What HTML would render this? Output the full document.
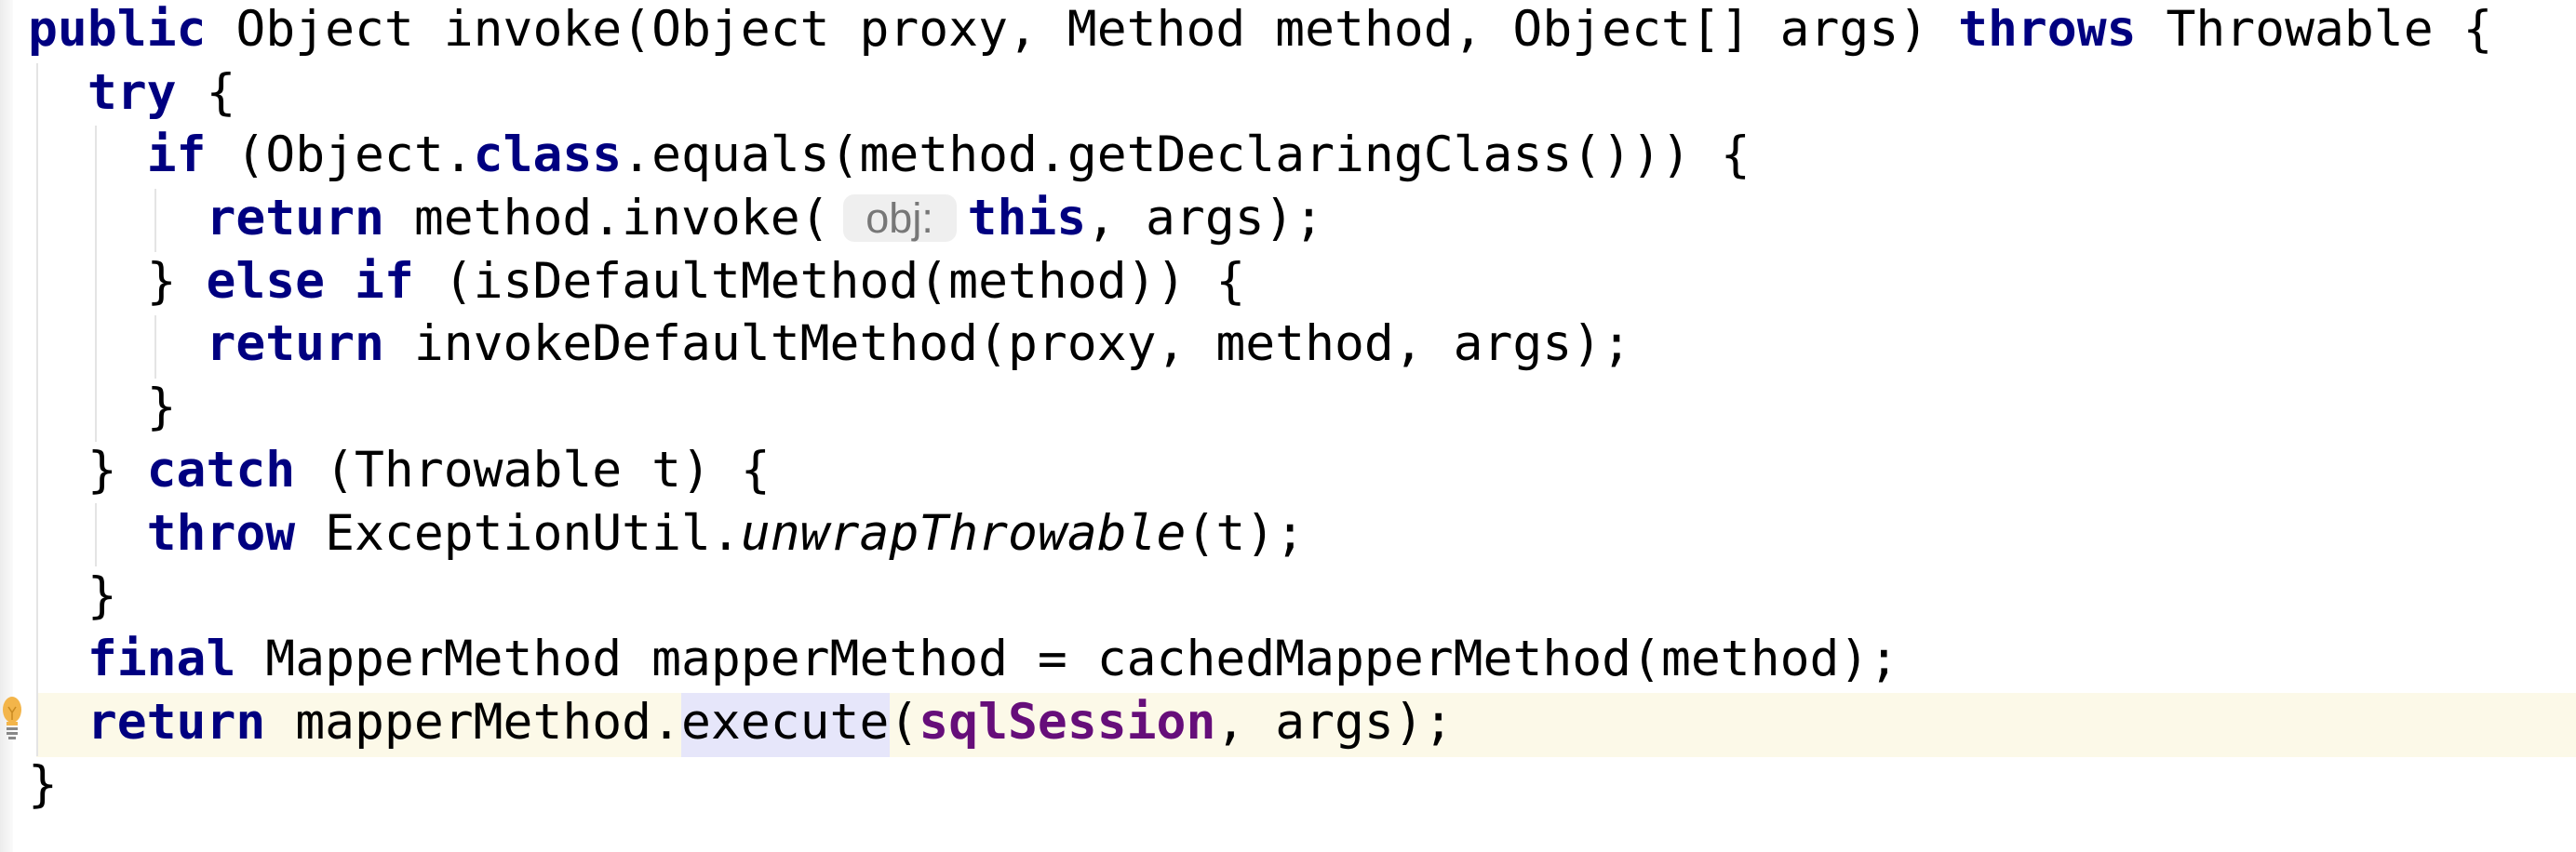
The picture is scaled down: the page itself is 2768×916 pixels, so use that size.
<!DOCTYPE html>
<html><head><meta charset="utf-8"><style>
html,body{margin:0;padding:0;background:#fff;}
body{width:2768px;height:916px;position:relative;overflow:hidden;}
.gut{position:absolute;left:0;top:0;width:14px;height:916px;background:linear-gradient(to right,#ececec,#fafafa);}
.hl{position:absolute;left:39px;right:0;top:745px;height:69px;background:#fcf9e8;}
.ex{position:absolute;left:732px;width:224px;top:745px;height:69px;background:#e6e6fa;}
.guide{position:absolute;width:2px;background:#e4e4e4;}
.l{position:absolute;left:30px;height:68px;line-height:68px;font-family:"DejaVu Sans Mono","Liberation Mono",monospace;font-size:53px;color:#000;white-space:pre;}
.k{color:#000080;font-weight:bold;}
.p{color:#660e7a;font-weight:bold;}
.i{font-style:italic;}
.hint{display:inline-block;width:122px;height:51px;line-height:51px;margin:0 12px 0 14px;background:#efefef;border-radius:12px;color:#777;font-family:"Liberation Sans","DejaVu Sans",sans-serif;font-size:45px;text-align:center;vertical-align:middle;position:relative;top:-3px;}
</style></head><body>
<div class="gut"></div>
<div class="hl"></div>
<div class="ex"></div>
<div class="guide" style="left:39px;top:68px;height:745px"></div>
<div class="guide" style="left:102px;top:135px;height:340px"></div>
<div class="guide" style="left:102px;top:541px;height:68px"></div>
<div class="guide" style="left:166px;top:203px;height:68px"></div>
<div class="guide" style="left:166px;top:339px;height:68px"></div>
<svg style="position:absolute;left:2px;top:748px" width="22" height="52" viewBox="0 0 22 52"><ellipse cx="11" cy="15" rx="10" ry="14" fill="#f3b54a"/><rect x="5" y="28" width="12" height="4" fill="#f3b54a"/><rect x="5" y="34" width="12" height="3" fill="#888"/><rect x="5" y="39" width="12" height="3" fill="#888"/><rect x="7" y="44" width="8" height="3" fill="#888"/><path d="M7 12 L11 18 L15 12 M11 18 V26" stroke="#c98a20" stroke-width="1.5" fill="none"/></svg>
<div class="l" style="top:-2px"><span class="k">public</span> Object invoke(Object proxy, Method method, Object[] args) <span class="k">throws</span> Throwable {</div>
<div class="l" style="top:66px">  <span class="k">try</span> {</div>
<div class="l" style="top:133px">    <span class="k">if</span> (Object.<span class="k">class</span>.equals(method.getDeclaringClass())) {</div>
<div class="l" style="top:201px">      <span class="k">return</span> method.invoke(<span class="hint">obj:</span><span class="k">this</span>, args);</div>
<div class="l" style="top:269px">    } <span class="k">else if</span> (isDefaultMethod(method)) {</div>
<div class="l" style="top:336px">      <span class="k">return</span> invokeDefaultMethod(proxy, method, args);</div>
<div class="l" style="top:404px">    }</div>
<div class="l" style="top:472px">  } <span class="k">catch</span> (Throwable t) {</div>
<div class="l" style="top:540px">    <span class="k">throw</span> ExceptionUtil.<span class="i">unwrapThrowable</span>(t);</div>
<div class="l" style="top:607px">  }</div>
<div class="l" style="top:675px">  <span class="k">final</span> MapperMethod mapperMethod = cachedMapperMethod(method);</div>
<div class="l" style="top:743px">  <span class="k">return</span> mapperMethod.execute(<span class="p">sqlSession</span>, args);</div>
<div class="l" style="top:810px">}</div>
</body></html>
